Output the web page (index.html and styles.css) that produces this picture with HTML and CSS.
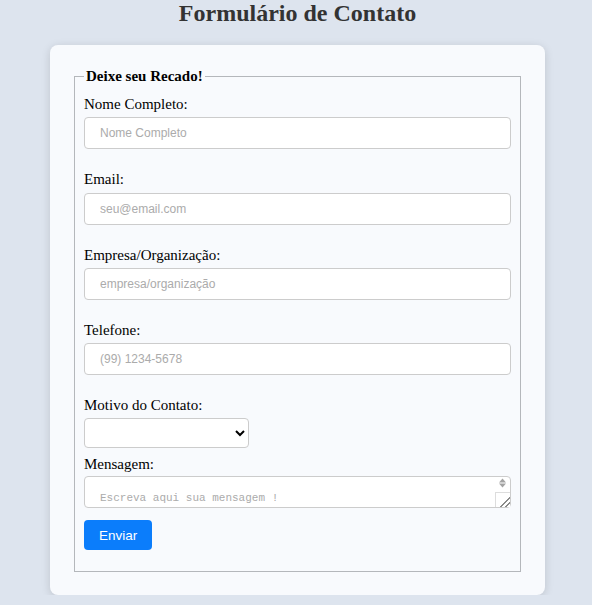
FILE: index.html
```html
<!DOCTYPE html>
<html lang="pt-BR">
<head>
<meta charset="utf-8">
<title>Formulário de Contato</title>
<link rel="stylesheet" href="styles.css">
</head>
<body>
<h1 class="title">Formulário de Contato</h1>
<div class="card">
  <form class="form">
    <fieldset class="fs">
      <legend class="legend">Deixe seu Recado!</legend>
      <label class="lbl" for="nome">Nome Completo:</label>
      <input class="field" id="nome" type="text" placeholder="Nome Completo">
      <label class="lbl" for="email">Email:</label>
      <input class="field" id="email" type="email" placeholder="seu@email.com">
      <label class="lbl" for="emp">Empresa/Organização:</label>
      <input class="field" id="emp" type="text" placeholder="empresa/organização">
      <label class="lbl" for="tel">Telefone:</label>
      <input class="field" id="tel" type="tel" placeholder="(99) 1234-5678">
      <label class="lbl" for="motivo">Motivo do Contato:</label>
      <select class="sel" id="motivo">
        <option value=""></option>
      </select>
      <label class="lbl lbl-msg" for="msg">Mensagem:</label>
      <div class="msg-wrap">
        <textarea class="msg" id="msg" placeholder="Escreva aqui sua mensagem !"></textarea>
        <svg class="spin" width="15" height="15" viewBox="0 0 15 15" aria-hidden="true">
          <polygon points="4,5.5 11,5.5 7.5,1.5" fill="#a3a3a3"/>
          <polygon points="4,6.5 11,6.5 7.5,10.5" fill="#a3a3a3"/>
        </svg>
      </div>
      <button class="btn" type="button">Enviar</button>
    </fieldset>
  </form>
</div>
</body>
</html>
```

FILE: styles.css
```css
body {
  margin: 0;
  padding: 0 0 0 3px;
  background: #dde4ee;
  font-family: "Liberation Serif", "Times New Roman", serif;
  color: #000;
}

.title {
  margin: 0 0 19px;
  font-size: 24px;
  line-height: 26px;
  font-weight: bold;
  text-align: center;
  color: #333;
}

.card {
  box-sizing: border-box;
  width: 495px;
  margin: 0 auto;
  padding: 23px 24px 23px;
  background: #f8fafd;
  border-radius: 8px;
  box-shadow: 0 2px 10px rgba(0, 0, 0, 0.14);
}

.form {
  margin: 0;
}

.fs {
  margin: 0;
  padding: 11px 9px 21px;
  border: 1px solid #b4b7bb;
  min-width: 0;
}

.legend {
  padding: 0 2px;
  font-size: 15px;
  font-weight: bold;
}

.lbl {
  display: block;
  font-size: 15px;
  line-height: 17.25px;
  margin-bottom: 4px;
}

.lbl-msg {
  margin-bottom: 2.5px;
}

.field {
  display: block;
  box-sizing: border-box;
  width: 100%;
  height: 32px;
  margin: 0 0 22px;
  padding: 0 15px;
  border: 1px solid #ccc;
  border-radius: 4px;
  background: #fff;
  font-family: "Liberation Sans", Arial, sans-serif;
  font-size: 12px;
  color: #333;
  outline: none;
}

.field::placeholder,
.msg::placeholder {
  color: #ababab;
}

.sel {
  display: block;
  box-sizing: border-box;
  width: 165px;
  height: 30px;
  margin: 0 0 8px;
  border: 1px solid #ccc;
  border-radius: 4px;
  background: #fff;
  font-family: "Liberation Sans", Arial, sans-serif;
  font-size: 13px;
}

.msg-wrap {
  position: relative;
  margin: 0 0 12px;
}

.msg {
  display: block;
  box-sizing: border-box;
  width: 100%;
  height: 32px;
  margin: 0;
  padding: 14px 15px 0;
  border: 1px solid #ccc;
  border-radius: 4px;
  background: #fff;
  font-family: "Liberation Mono", "DejaVu Sans Mono", monospace;
  font-size: 11px;
  line-height: 14px;
  overflow-y: scroll;
}

.msg::-webkit-scrollbar {
  width: 15px;
  background-color: #fff;
}

.msg::-webkit-scrollbar-thumb {
  background-color: transparent;
}

.msg::-webkit-resizer {
  background:
    linear-gradient(135deg, transparent 62%, #8a8a8a 62%, #8a8a8a 68%, transparent 68%, transparent 80%, #8a8a8a 80%, #8a8a8a 86%, transparent 86%),
    #fff;
  border-left: 1px solid #ddd;
  border-top: 1px solid #ddd;
}

.spin {
  position: absolute;
  top: 1px;
  right: 1px;
  pointer-events: none;
}

.btn {
  display: block;
  height: 30px;
  padding: 0 15px;
  border: none;
  border-radius: 4px;
  background: #0b7dfb;
  color: #fff;
  font-family: "Liberation Sans", Arial, sans-serif;
  font-size: 13.5px;
  cursor: pointer;
}
```
